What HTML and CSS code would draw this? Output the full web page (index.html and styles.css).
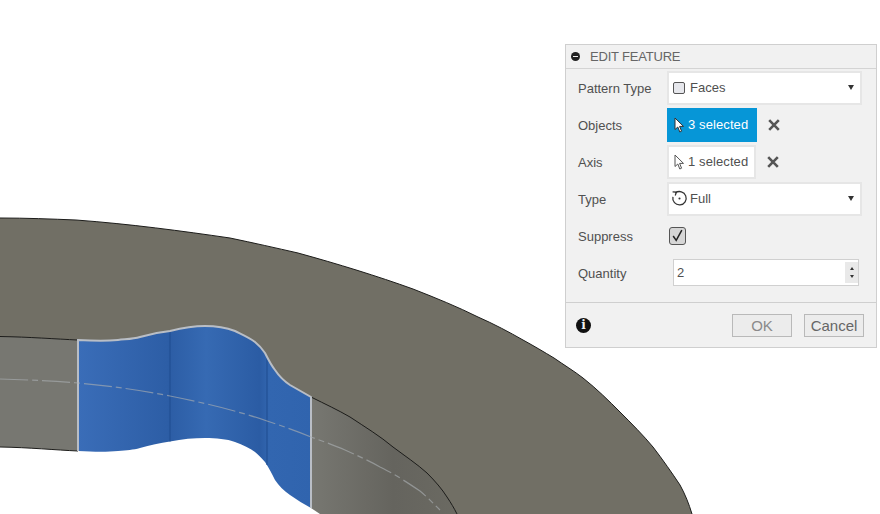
FILE: index.html
```html
<!DOCTYPE html>
<html lang="en">
<head>
<meta charset="utf-8">
<title>Edit Feature</title>
<link rel="stylesheet" href="styles.css">
</head>
<body>
<div class="viewport">
  <svg class="model" width="880" height="514" viewBox="0 0 880 514">
    <defs>
      <linearGradient id="blue" gradientUnits="userSpaceOnUse" x1="78" y1="0" x2="311" y2="0">
        <stop offset="0" stop-color="#3a6db8"/>
        <stop offset="0.38" stop-color="#2d5ea6"/>
        <stop offset="0.39" stop-color="#2c5da5"/>
        <stop offset="0.55" stop-color="#366ab3"/>
        <stop offset="0.78" stop-color="#2b5ca4"/>
        <stop offset="0.82" stop-color="#3266b0"/>
        <stop offset="1" stop-color="#3064ae"/>
      </linearGradient>
      <linearGradient id="wallR" gradientUnits="userSpaceOnUse" x1="312" y1="0" x2="460" y2="0">
        <stop offset="0" stop-color="#777771"/>
        <stop offset="0.55" stop-color="#65645e"/>
        <stop offset="1" stop-color="#6b6a62"/>
      </linearGradient>
    </defs>
    <path class="top" d="M0 218 C26 218 52 219 76 220 C130 224 182 231 230 238 C254 243 276 248 298 253 C338 264 377 276 413 289 C436 298 458 307 478 317 C494 324 509 332 523 340 C534 346 544 352 554 358 C564 365 574 371 583 378 C597 389 609 401 620 412 C632 424 643 435 653 447 C663 460 672 473 680 485 C685 494 689 504 692 514 L457 514 L311 400 L78 400 L78 340 L0 336.500 Z"/>
    <path class="wall-l" d="M0 336.500 C30 337 55 339 78 340 L78 451 C55 450 30 447.500 0 447 Z"/>
    <path class="wall-r" d="M311 397 C325 404 338 410 350 417 C365 427 380 436 393 447 C405 456 417 464 427 473 C435 481 442 489 447 497 C451 503 454 508 457 514 L320 514 L311 508 Z"/>
    <path class="face" d="M78 340 C95 341 108 341 118 340 C127 339 133 339 140 337 C150 334 160 332 170 331 C182 328 194 326 205 326 C216 326 227 328 235 331 C243 335 250 338 255 342 C260 346 263 350 265 353 C268 359 271 365 275 370 C279 376 284 381 290 385 C297 389 304 393 311 397 L311 508 C304 504 297 500 290 495 C284 491 279 486 275 480 C272 474 269 468 265 462 C262 459 259 455 255 452 C250 448 243 445 235 442 C227 439 216 438 205 438 C194 438 182 439 170 441.500 C160 443 150 445 140 448 C133 450 127 450 118 451 C108 452 95 452 78 451 Z"/>
    <path class="seam" d="M170 331 L170 441.500 M267 356 L267 465"/>
    <path class="edge-black" d="M0 218 C26 218 52 219 76 220 C130 224 182 231 230 238 C254 243 276 248 298 253 C338 264 377 276 413 289 C436 298 458 307 478 317 C494 324 509 332 523 340 C534 346 544 352 554 358 C564 365 574 371 583 378 C597 389 609 401 620 412 C632 424 643 435 653 447 C663 460 672 473 680 485 C685 494 689 504 692 514"/>
    <path class="edge-black" d="M0 336.500 C30 337 55 339 78 340 M0 447 C30 447.500 55 450 78 451"/>
    <path class="edge-black" d="M311 397 C325 404 338 410 350 417 C365 427 380 436 393 447 C405 456 417 464 427 473 C435 481 442 489 447 497 C451 503 454 508 457 514"/>
    <path class="edge-light" d="M78 451 L78 340 C95 341 108 341 118 340 C127 339 133 339 140 337 C150 334 160 332 170 331 C182 328 194 326 205 326 C216 326 227 328 235 331 C243 335 250 338 255 342 C260 346 263 350 265 353 C268 359 271 365 275 370 C279 376 284 381 290 385 C297 389 304 393 311 397 L311 508"/>
    <path class="axis" d="M0 379 C30 380 55 381 78 383 C110 386 140 390 170 396 C205 403 238 411 267 421 C282 426 297 431 311 437 C325 442 336 446 345 450 C358 456 370 461 380 467 C388 471 394 474 400 478 C408 483 414 487 420 491 C426 496 431 501 440 510"/>
  </svg>

  <section class="panel">
    <header class="panel-head">
      <span class="collapse"></span>
      <span class="panel-title">EDIT FEATURE</span>
    </header>
    <div class="panel-body">
      <div class="row">
        <span class="label">Pattern Type</span>
        <div class="field select">
          <span class="face-icon"></span>
          <span>Faces</span>
          <span class="caret"></span>
        </div>
      </div>
      <div class="row">
        <span class="label">Objects</span>
        <div class="field chooser active">
          <svg class="cursor" width="11" height="16" viewBox="0 0 11 16"><path d="M1 1 L1 12.500 L3.800 10 L5.800 15 L7.600 14.200 L5.600 9.400 L9.500 9.400 Z"/></svg>
          <span class="sel-text">3 selected</span>
        </div>
        <svg class="clear" width="12" height="12" viewBox="0 0 12 12"><path d="M1.200 1.200 L10.800 10.800 M10.800 1.200 L1.200 10.800"/></svg>
      </div>
      <div class="row">
        <span class="label">Axis</span>
        <div class="field chooser">
          <svg class="cursor" width="11" height="16" viewBox="0 0 11 16"><path d="M1 1 L1 12.500 L3.800 10 L5.800 15 L7.600 14.200 L5.600 9.400 L9.500 9.400 Z"/></svg>
          <span class="sel-text">1 selected</span>
        </div>
        <svg class="clear" width="12" height="12" viewBox="0 0 12 12"><path d="M1.200 1.200 L10.800 10.800 M10.800 1.200 L1.200 10.800"/></svg>
      </div>
      <div class="row">
        <span class="label">Type</span>
        <div class="field select">
          <svg class="full-icon" width="17" height="17" viewBox="0 0 16 16"><path d="M4.200 2.700 A6.300 6.300 0 1 1 1.800 6.500"/><path d="M1.500 1.800 L5 2 L4 5.200"/><circle cx="8" cy="8" r="1"/></svg>
          <span>Full</span>
          <span class="caret"></span>
        </div>
      </div>
      <div class="row">
        <span class="label">Suppress</span>
        <span class="check">
          <svg width="13" height="13" viewBox="0 0 12 12"><path d="M2 6.500 L4.800 10.500 L10 1"/></svg>
        </span>
      </div>
      <div class="row">
        <span class="label">Quantity</span>
        <div class="number">
          <span>2</span>
          <span class="spin"><i class="up"></i><i class="down"></i></span>
        </div>
      </div>
    </div>
    <footer class="panel-foot">
      <span class="info">i</span>
      <button class="btn ok">OK</button>
      <button class="btn">Cancel</button>
    </footer>
  </section>
</div>
</body>
</html>
```

FILE: styles.css
```css
* { box-sizing: border-box; }
html, body { margin: 0; padding: 0; background: #fff; }
body { font-family: "Liberation Sans", Arial, sans-serif; font-size: 13px; color: #505050; }
.viewport { position: relative; width: 880px; height: 514px; overflow: hidden; background: #fff; }
.model { position: absolute; left: 0; top: 0; display: block; }
.top { fill: #716f65; }
.wall-l { fill: #777771; }
.wall-r { fill: url(#wallR); }
.face { fill: url(#blue); }
.seam { fill: none; stroke: #1f4d8f; stroke-width: 1; }
.edge-black { fill: none; stroke: #1c1c1a; stroke-width: 1; }
.edge-light { fill: none; stroke: #b9bec6; stroke-width: 2; }
.axis { fill: none; stroke: #a9adb0; stroke-width: 1.200; stroke-dasharray: 28 4 6 4; opacity: .65; }

.panel { position: absolute; left: 565px; top: 44px; width: 312px; height: 304px; background: #f1f1f1; border: 1px solid #cfcfcf; display: flex; flex-direction: column; }
.panel-head { height: 24px; display: flex; align-items: center; gap: 10px; padding-left: 5px; border-bottom: 1px solid #d4d4d4; flex: none; }
.collapse { position: relative; width: 9px; height: 9px; border-radius: 50%; background: #222; flex: none; }
.collapse::after { content: ""; position: absolute; left: 2px; right: 2px; top: 4px; height: 1px; background: #f1f1f1; }
.panel-title { font-size: 13px; color: #666; letter-spacing: -.2px; }

.panel-body { flex: 1; display: flex; flex-direction: column; padding: 0 0 0 12px; }
.row { height: 37px; display: flex; align-items: center; flex: none; }
.label { width: 89px; flex: none; padding-top: 1px; }
.field { height: 34px; background: #fff; border: 2px solid #e6e6e6; display: flex; align-items: center; font-size: 13px; }
.select { width: 195px; padding-left: 3px; gap: 4px; }
.caret { margin-left: auto; margin-right: 6px; width: 0; height: 0; border-left: 3.500px solid transparent; border-right: 3.500px solid transparent; border-top: 5px solid #333; }
.face-icon { width: 12px; height: 12px; margin: 0 1px 0 1px; border: 1px solid #555; border-radius: 2px; background: #e6e7ec; flex: none; }
.full-icon { flex: none; margin-left: -1px; margin-right: -2px; }
.full-icon path { fill: none; stroke: #333; stroke-width: 1.200; }
.full-icon circle { fill: #333; }
.chooser { width: 89px; padding-left: 5px; gap: 3px; }
.sel-text { letter-spacing: .1px; }
.chooser.active { width: 90px; background: #0696d7; border-color: #0696d7; color: #fff; }
.cursor { flex: none; }
.cursor path { fill: #fff; stroke: #555; stroke-width: 1; }
.chooser.active .cursor path { stroke: #333; }
.clear { margin-left: 11px; flex: none; }
.clear path { fill: none; stroke: #555; stroke-width: 2.600; }
.check { width: 17px; height: 18px; margin-left: 2px; background: #d6d6d6; border: 1px solid #555; border-radius: 3px; display: flex; align-items: center; justify-content: center; }
.check path { fill: none; stroke: #222; stroke-width: 1.400; }
.number { width: 186px; height: 27px; margin-left: 6px; background: #fff; border: 1px solid #d0d0d0; display: flex; align-items: center; padding-left: 3px; }
.spin { margin-left: auto; margin-right: 0; width: 13px; height: 21px; background: #e9e9e9; display: flex; flex-direction: column; align-items: center; justify-content: space-evenly; }
.spin i { width: 0; height: 0; border-left: 2px solid transparent; border-right: 2px solid transparent; }
.spin .up { border-bottom: 3px solid #333; }
.spin .down { border-top: 3px solid #333; }

.panel-foot { height: 45px; border-top: 1px solid #cfcfcf; display: flex; align-items: center; flex: none; padding: 0 12px 0 10px; gap: 12px; }
.info { width: 15px; height: 15px; margin-right: auto; border-radius: 50%; background: #111; color: #f1f1f1; font-family: "DejaVu Serif", serif; font-weight: 700; font-size: 12px; line-height: 15px; text-align: center; }
.btn { width: 60px; height: 23px; padding: 0; background: #ececec; border: 1px solid #b9b9b9; font-family: inherit; font-size: 15px; color: #666; }
.btn.ok { color: #8a8a8a; }
```
